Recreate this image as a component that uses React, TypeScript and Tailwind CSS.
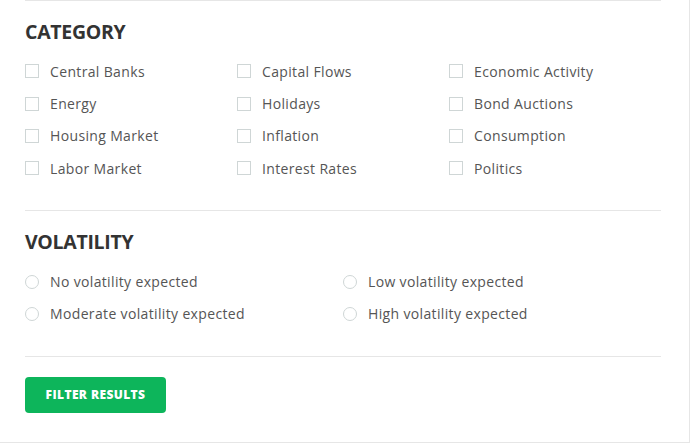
import React from "react";

const categories = [
  "Central Banks",
  "Capital Flows",
  "Economic Activity",
  "Energy",
  "Holidays",
  "Bond Auctions",
  "Housing Market",
  "Inflation",
  "Consumption",
  "Labor Market",
  "Interest Rates",
  "Politics",
];

const volatility = [
  "No volatility expected",
  "Low volatility expected",
  "Moderate volatility expected",
  "High volatility expected",
];

export default function App() {
  return (
    <div
      className="w-[690px] h-[443px] bg-white border-r border-b border-[#e6e6e6] text-[#555]"
      style={{ fontFamily: '"Open Sans", "Liberation Sans", sans-serif' }}
    >
      <div className="ml-[25px] mr-[28px]">
        {/* Category */}
        <div className="border-t border-[#e6e6e6] pt-[19px] pb-[25px]">
          <h3 className="text-[19.5px] leading-6 font-bold text-[#333] tracking-[-0.3px]">CATEGORY</h3>
          <div className="mt-[11px] grid grid-cols-3">
            {categories.map((c) => (
              <label key={c} className="h-[32.4px] flex items-center">
                <span className="w-[14px] h-[14px] border border-[#cfd6d6] bg-white shrink-0" />
                <span className="ml-[11px] text-[14px] tracking-[0.35px]">{c}</span>
              </label>
            ))}
          </div>
        </div>

        {/* Volatility */}
        <div className="border-t border-[#e6e6e6] pt-[19px] pb-[26px]">
          <h3 className="text-[19.5px] leading-6 font-bold text-[#333] tracking-[-0.3px]">VOLATILITY</h3>
          <div className="mt-[12px] grid grid-cols-2">
            {volatility.map((v) => (
              <label key={v} className="h-8 flex items-center">
                <span className="w-[14px] h-[14px] rounded-full border border-[#cfd6d6] bg-white shrink-0" />
                <span className="ml-[11px] text-[14px] tracking-[0.35px]">{v}</span>
              </label>
            ))}
          </div>
        </div>

        <div className="border-t border-[#e6e6e6] pt-[20px]">
          <button className="w-[141px] h-9 rounded bg-[#0db55b] text-white text-[12px] font-extrabold tracking-[0.4px]">
            FILTER RESULTS
          </button>
        </div>
      </div>
    </div>
  );
}
